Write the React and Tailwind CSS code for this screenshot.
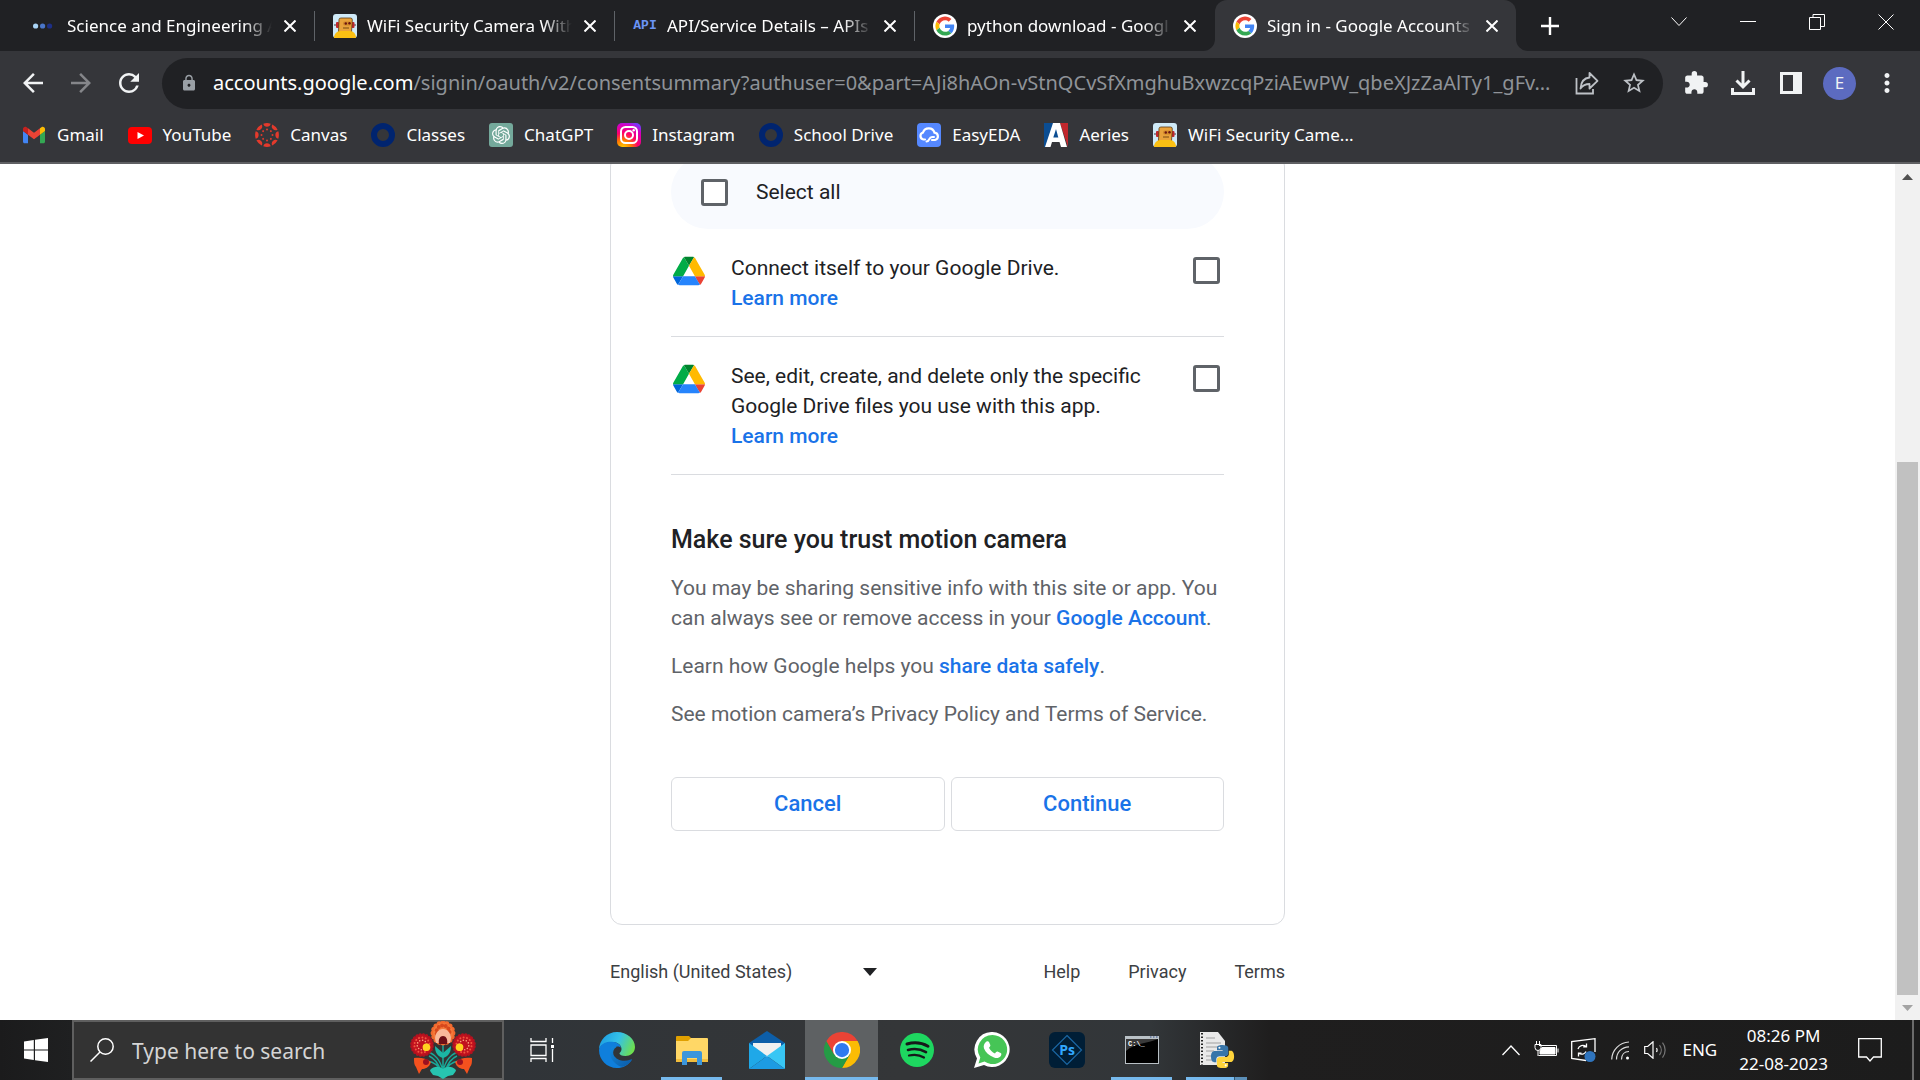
import { useState } from "react";
import {
  MdArrowBack,
  MdArrowForward,
  MdRefresh,
  MdLock,
  MdStarBorder,
  MdExtension,
  MdMoreVert,
} from "react-icons/md";
import { SiOpenai } from "react-icons/si";

const GoogleIcon = () => (
  <svg viewBox="-6 -6 60 60" className="size-6 shrink-0" aria-hidden="true">
    <circle cx="24" cy="24" r="30" fill="#fff" />
    <path fill="#EA4335" d="M24 9.5c3.54 0 6.71 1.22 9.21 3.6l6.85-6.85C35.9 2.38 30.47 0 24 0 14.62 0 6.51 5.38 2.56 13.22l7.98 6.19C12.43 13.72 17.74 9.5 24 9.5z" />
    <path fill="#4285F4" d="M46.98 24.55c0-1.57-.15-3.09-.38-4.55H24v9.02h12.94c-.58 2.96-2.26 5.48-4.78 7.18l7.73 6c4.51-4.18 7.09-10.36 7.09-17.65z" />
    <path fill="#FBBC05" d="M10.53 28.59c-.48-1.45-.76-2.99-.76-4.59s.27-3.14.76-4.59l-7.98-6.19C.92 16.46 0 20.12 0 24c0 3.88.92 7.54 2.56 10.78l7.97-6.19z" />
    <path fill="#34A853" d="M24 48c6.48 0 11.93-2.13 15.89-5.81l-7.73-6c-2.15 1.45-4.92 2.3-8.16 2.3-6.26 0-11.57-4.22-13.47-9.91l-7.98 6.19C6.51 42.62 14.62 48 24 48z" />
  </svg>
);

const DotsIcon = () => (
  <svg viewBox="0 0 24 24" className="size-6 shrink-0" aria-hidden="true">
    <circle cx="2.600" cy="12" r="2.6" fill="#a9d3f5" />
    <circle cx="9.600" cy="12" r="2.6" fill="#4a76c9" />
    <circle cx="16.600" cy="12" r="2.6" fill="#1d2f86" />
  </svg>
);

const RobotIcon = () => (
  <svg viewBox="0 0 24 24" className="size-6 shrink-0" aria-hidden="true">
    <rect width="24" height="24" rx="3" fill="#cfeaf8" />
    <path d="M1 11h22" stroke="#555" strokeWidth="1.2" />
    <rect x="3" y="8" width="3" height="6" rx="1" fill="#c0272d" />
    <rect x="18.500" y="8" width="3" height="6" rx="1" fill="#c0272d" />
    <path d="M6 5.500Q6 4 8 4h9.500q2 0 1.800 2L18.500 18h-13z" fill="#e9a23b" stroke="#5b3b14" strokeWidth=".8" />
    <rect x="10" y="7.500" width="8.500" height="4" rx="2" fill="#d0872a" />
    <circle cx="12.800" cy="9.500" r="1.200" fill="#6b1510" />
    <circle cx="16.500" cy="9.300" r="1.200" fill="#6b1510" />
    <path d="M10 14h6" stroke="#7a4a12" />
    <path d="M1 24c0-4 3-7 6-7h10c3.500 0 6 3 6 7z" fill="#fbc013" />
  </svg>
);

const ApiIcon = () => (
  <span className="w-6 shrink-0 text-center font-['Liberation_Mono',monospace] text-[13px] leading-6 font-bold text-[#6b94f5]">
    API
  </span>
);

const GmailIcon = () => (
  <svg viewBox="48 36 96 78" className="size-6 shrink-0" aria-hidden="true">
    <path fill="#4285f4" d="M58 108h14V74L52 59v43c0 3.32 2.69 6 6 6" />
    <path fill="#34a853" d="M120 108h14c3.32 0 6-2.69 6-6V59l-20 15" />
    <path fill="#fbbc04" d="M120 48v26l20-15v-8c0-7.42-8.47-11.65-14.4-7.2" />
    <path fill="#ea4335" d="M72 74V48l24 18 24-18v26L96 92" />
    <path fill="#c5221f" d="M52 51v8l20 15V48l-5.600-4.400c-5.940-4.450-14.400-.22-14.400 7.200" />
  </svg>
);

const YouTubeIcon = () => (
  <svg viewBox="0 0 24 24" className="size-6 shrink-0" aria-hidden="true">
    <rect y="4" width="24" height="17" rx="4" fill="#f00" />
    <path d="M9.500 9v7l6.500-3.500z" fill="#fff" />
  </svg>
);

const CanvasIcon = () => (
  <svg viewBox="0 0 24 24" className="size-6 shrink-0" aria-hidden="true" fill="#e33a2c">
    {[0, 45, 90, 135, 180, 225, 270, 315].map((a) => (
      <g key={a} transform={`rotate(${a} 12 12)`}>
        <path d="M8.300.7a11.900 11.900 0 0 1 7.400 0 3.800 3.800 0 0 1-7.400 0z" />
        <circle cx="12" cy="6.500" r="1" />
      </g>
    ))}
  </svg>
);

const RingIcon = () => (
  <svg viewBox="0 0 24 24" className="size-6 shrink-0" aria-hidden="true">
    <circle cx="12" cy="12" r="9" fill="none" stroke="#00246f" strokeWidth="6" />
  </svg>
);

const ChatIcon = () => (
  <span className="flex size-6 shrink-0 items-center justify-center rounded-[3px] bg-[#74a99b] text-white">
    <SiOpenai size={18} />
  </span>
);

const InstagramIcon = () => (
  <svg viewBox="0 0 24 24" className="size-6 shrink-0" aria-hidden="true">
    <defs>
      <radialGradient id="ig" cx=".25" cy="1.05" r="1.15">
        <stop offset="0" stopColor="#ffd600" />
        <stop offset=".3" stopColor="#ff7a00" />
        <stop offset=".55" stopColor="#ff0069" />
        <stop offset=".85" stopColor="#d300c5" />
        <stop offset="1" stopColor="#7638fa" />
      </radialGradient>
    </defs>
    <rect width="24" height="24" rx="5" fill="url(#ig)" />
    <g fill="none" stroke="#fff" strokeWidth="2">
      <rect x="4" y="4" width="16" height="16" rx="4.500" />
      <circle cx="12" cy="12" r="4" />
    </g>
    <circle cx="16.700" cy="7.300" r="1.200" fill="#fff" />
  </svg>
);

const EasyEdaIcon = () => (
  <svg viewBox="0 0 24 24" className="size-6 shrink-0" aria-hidden="true">
    <rect width="24" height="24" rx="4" fill="#5588ff" />
    <path
      d="M8 16.500H6.500a3.600 3.600 0 0 1-.5-7 6 6 0 0 1 11.500.2 3.700 3.700 0 0 1 .5 7.300h-3"
      fill="none"
      stroke="#fff"
      strokeWidth="2.200"
      strokeLinecap="round"
    />
    <path d="M9.500 18.500c3.500 0 2-4.500 5.500-4.500h2" fill="none" stroke="#fff" strokeWidth="2" strokeLinecap="round" />
  </svg>
);

const AeriesIcon = () => (
  <svg viewBox="0 0 24 24" className="size-6 shrink-0" aria-hidden="true">
    <path d="M0 0h12L2 24H0z" fill="#0b4d92" />
    <path d="M16 0h8v24z" fill="#c1272d" />
    <path d="M9 0h7l7 24h-6l-1.500-5H8l-1.500 5H1z" fill="#fff" />
    <path d="m12 6 2.300 8.500H9.300z" fill="#0b4d92" />
  </svg>
);

const DriveIcon = () => (
  <svg viewBox="0 0 87.3 78" className="mx-0.5 mt-[3px] h-[30px] w-8 shrink-0" aria-hidden="true">
    <path fill="#0066da" d="m6.6 66.85 3.85 6.65c.8 1.4 1.95 2.5 3.3 3.3l13.75-23.8h-27.5c0 1.55.4 3.1 1.2 4.5z" />
    <path fill="#00ac47" d="m43.65 25-13.75-23.8c-1.35.8-2.5 1.9-3.3 3.3l-25.4 44a9.06 9.06 0 0 0 -1.2 4.5h27.5z" />
    <path fill="#ea4335" d="m73.55 76.8c1.35-.8 2.5-1.9 3.3-3.3l1.6-2.75 7.65-13.25c.8-1.4 1.2-2.95 1.2-4.5h-27.502l5.852 11.5z" />
    <path fill="#00832d" d="m43.65 25 13.75-23.8c-1.35-.8-2.9-1.2-4.5-1.2h-18.5c-1.6 0-3.15.45-4.5 1.2z" />
    <path fill="#2684fc" d="m59.8 53h-32.3l-13.75 23.8c1.35.8 2.9 1.2 4.5 1.2h50.8c1.6 0 3.15-.45 4.5-1.2z" />
    <path fill="#ffba00" d="m73.4 26.5-12.7-22c-.8-1.4-1.95-2.5-3.3-3.3l-13.75 23.8 16.15 28h27.45c0-1.55-.4-3.1-1.2-4.5z" />
  </svg>
);

const tabs = [
  { title: "Science and Engineering A", icon: <DotsIcon /> },
  { title: "WiFi Security Camera With", icon: <RobotIcon /> },
  { title: "API/Service Details – APIs", icon: <ApiIcon /> },
  { title: "python download - Googl", icon: <GoogleIcon /> },
  { title: "Sign in - Google Accounts", icon: <GoogleIcon />, active: true },
];

const bookmarks = [
  { name: "Gmail", icon: <GmailIcon /> },
  { name: "YouTube", icon: <YouTubeIcon /> },
  { name: "Canvas", icon: <CanvasIcon /> },
  { name: "Classes", icon: <RingIcon /> },
  { name: "ChatGPT", icon: <ChatIcon /> },
  { name: "Instagram", icon: <InstagramIcon /> },
  { name: "School Drive", icon: <RingIcon /> },
  { name: "EasyEDA", icon: <EasyEdaIcon /> },
  { name: "Aeries", icon: <AeriesIcon /> },
  { name: "WiFi Security Came...", icon: <RobotIcon /> },
];

function Tab({ tab, divider }) {
  return (
    <div
      className={
        tab.active
          ? "relative flex w-[301px] items-center rounded-t-xl bg-[#35363a] pr-3 pl-[18px]"
          : "flex w-[300px] items-center pl-[18px]"
      }
    >
      {tab.active && (
        <>
          <svg viewBox="0 0 12 12" className="absolute bottom-0 -left-3 size-3" fill="#35363a">
            <path d="M12 0v12H0A12 12 0 0 0 12 0z" />
          </svg>
          <svg viewBox="0 0 12 12" className="absolute -right-3 bottom-0 size-3" fill="#35363a">
            <path d="M0 0v12h12A12 12 0 0 1 0 0z" />
          </svg>
        </>
      )}
      {tab.icon}
      <span className="ml-2.5 min-w-0 flex-1 overflow-hidden text-[17px] whitespace-nowrap [mask-image:linear-gradient(to_right,black_86%,transparent)]">
        {tab.title}
      </span>
      <button aria-label="Close tab" className="ml-1.5 flex size-6 items-center justify-center">
        <svg viewBox="0 0 12 12" className="size-3" stroke="#fff" strokeWidth="2">
          <path d="m.5.5 11 11m0-11-11 11" />
        </svg>
      </button>
      {!tab.active && (
        <span className={divider ? "ml-3 h-[30px] w-px bg-[#5f6368]" : "ml-3 w-px"} />
      )}
    </div>
  );
}

function TabStrip() {
  return (
    <div className="flex h-[51px] bg-[#202124] pl-[15px]">
      {tabs.map((tab, i) => (
        <Tab key={tab.title} tab={tab} divider={i < 3} />
      ))}
      <button aria-label="New tab" className="ml-3 flex w-11 items-center justify-center">
        <svg viewBox="0 0 18 18" className="size-[18px]" stroke="#fff" strokeWidth="2.4">
          <path d="M9 0v18M0 9h18" />
        </svg>
      </button>
      <div className="ml-auto flex h-[43px]">
        <button aria-label="Search tabs" className="flex w-[68px] items-center justify-center">
          <svg viewBox="0 0 16 10" className="h-[10px] w-4" fill="none" stroke="#fff">
            <path d="m.5.5 7.500 8 7.500-8" />
          </svg>
        </button>
        <button aria-label="Minimize" className="flex w-[69px] items-center justify-center">
          <span className="h-px w-4 bg-white" />
        </button>
        <button aria-label="Restore" className="flex w-[69px] items-center justify-center">
          <svg viewBox="0 0 16 16" className="size-4" fill="none" stroke="#fff">
            <path d="M.5 3.500h11v12H.5zM4 3.500v-3h11.500v12h-4" />
          </svg>
        </button>
        <button aria-label="Close" className="flex w-[69px] items-center justify-center">
          <svg viewBox="0 0 16 16" className="size-4" stroke="#fff">
            <path d="m.5.5 15 15m0-15-15 15" />
          </svg>
        </button>
      </div>
    </div>
  );
}

function Toolbar() {
  return (
    <div className="flex h-16 items-center pl-[18px] text-[#f1f3f4]">
      <button aria-label="Back" className="mr-[18px]"><MdArrowBack size={30} /></button>
      <button aria-label="Forward" className="mr-[18px] text-[#85868a]"><MdArrowForward size={30} /></button>
      <button aria-label="Reload" className="mr-[18px]"><MdRefresh size={30} /></button>
      <div className="flex h-[51px] min-w-0 flex-1 items-center rounded-full bg-[#202124] pr-4 pl-[18px]">
        <MdLock size={18} className="shrink-0 text-[#9aa0a6]" />
        <label htmlFor="url" className="ml-[15px] text-xl text-white">accounts.google.com</label>
        <input
          id="url"
          type="text"
          defaultValue="/signin/oauth/v2/consentsummary?authuser=0&part=AJi8hAOn-vStnQCvSfXmghuBxwzcqPziAEwPW_qbeXJzZaAlTy1_gFv..."
          className="min-w-0 flex-1 bg-transparent text-xl text-[#8f9398] outline-none"
        />
        <button aria-label="Share this page" className="ml-4">
          <svg viewBox="0 0 24 24" className="size-6" fill="none" stroke="#bdc1c6" strokeWidth="1.800">
            <path d="M1.500 7v15.500H18V18" />
            <path d="M14.500 2v4.500C9 7 6 10.500 5.500 17.500c2.500-3.500 5-4.500 9-4.500v4.500l8-7.700z" strokeLinejoin="round" />
          </svg>
        </button>
        <button aria-label="Bookmark this tab" className="ml-[22px] text-[#bdc1c6]"><MdStarBorder size={26} /></button>
      </div>
      <button aria-label="Extensions" className="ml-5"><MdExtension size={26} /></button>
      <button aria-label="Downloads" className="ml-[22px]">
        <svg viewBox="0 0 24 24" className="size-6" fill="none" stroke="currentColor" strokeWidth="3">
          <path d="M12 0v15M5.500 9.500l6.500 6.500 6.500-6.500M1.500 17v5.500h21V17" />
        </svg>
      </button>
      <button aria-label="Side panel" className="ml-[25px]">
        <svg viewBox="0 0 22 22" className="size-[22px]">
          <path d="M0 0h22v22H0zM3 3v16h10V3z" fill="currentColor" fillRule="evenodd" />
        </svg>
      </button>
      <button className="ml-[21px] size-[33px] rounded-full bg-[#5c6bc0] text-[17px]">E</button>
      <button aria-label="Menu" className="mr-[18px] ml-4"><MdMoreVert size={30} /></button>
    </div>
  );
}

function BookmarksBar() {
  return (
    <nav className="flex h-[47px] items-center gap-6 pb-2 pl-[22px]">
      {bookmarks.map((b) => (
        <a key={b.name} href="#" className="flex items-center gap-[11px] text-[17px] whitespace-nowrap">
          {b.icon}
          {b.name}
        </a>
      ))}
    </nav>
  );
}

const checkboxClass =
  "size-[27px] shrink-0 appearance-none rounded-[3px] border-3 border-[#5f6368] bg-white checked:bg-[#1a73e8]";
const linkClass = "font-medium text-[#1a73e8]";

function Scope({ id, checked, onChange, children }) {
  return (
    <div className="flex border-b border-[#dadce0] pt-6 pb-[23px]">
      <DriveIcon />
      <div className="mr-10 ml-6 flex-1">
        <label htmlFor={id}>{children}</label>
        <br />
        <a href="#" className={linkClass}>Learn more</a>
      </div>
      <input id={id} type="checkbox" checked={checked} onChange={onChange} className={`mt-1 mr-1 ${checkboxClass}`} />
    </div>
  );
}

function Consent() {
  const [scopes, setScopes] = useState({ connect: false, files: false });

  const toggle = (name) => setScopes((prev) => ({ ...prev, [name]: !prev[name] }));
  const allChecked = scopes.connect && scopes.files;

  return (
    <div className="-mt-2.5 w-[675px]">
      <div className="rounded-xl border border-[#dadce0] px-[60px] pb-[93px] text-[21px] leading-[30px] text-[#202124]">
        <div className="flex h-[74px] items-center rounded-full bg-[#f8fafe] pl-[30px]">
          <input
            id="all"
            type="checkbox"
            checked={allChecked}
            onChange={() => setScopes({ connect: !allChecked, files: !allChecked })}
            className={checkboxClass}
          />
          <label htmlFor="all" className="ml-7">Select all</label>
        </div>
        <Scope id="connect" checked={scopes.connect} onChange={() => toggle("connect")}>
          Connect itself to your Google Drive.
        </Scope>
        <Scope id="files" checked={scopes.files} onChange={() => toggle("files")}>
          See, edit, create, and delete only the specific Google Drive files you use with this app.
        </Scope>
        <h2 className="mt-[47px] text-[25px] leading-9 font-medium">Make sure you trust motion camera</h2>
        <div className="mt-[15px] space-y-[18px] text-[#5f6368]">
          <p>
            You may be sharing sensitive info with this site or app. You can always see or remove access in your{" "}
            <a href="#" className={linkClass}>Google Account</a>.
          </p>
          <p>
            Learn how Google helps you <a href="#" className={linkClass}>share data safely</a>.
          </p>
          <p>See motion camera’s Privacy Policy and Terms of Service.</p>
        </div>
        <div className="mt-12 grid grid-cols-2 gap-1.5 text-[22px] font-medium text-[#1a73e8]">
          <button className="h-[54px] rounded-md border border-[#dadce0]">Cancel</button>
          <button className="h-[54px] rounded-md border border-[#dadce0]">Continue</button>
        </div>
      </div>
      <footer className="mt-[34px] flex items-center justify-between text-lg leading-[26px] text-[#3c4043]">
        <div className="relative w-[267px]">
          <select aria-label="Language" className="w-full appearance-none bg-transparent outline-none">
            <option>English (United States)</option>
          </select>
          <svg viewBox="0 0 14 8" className="pointer-events-none absolute top-[9px] right-0 h-2 w-[14px]" fill="#202124">
            <path d="M0 0h14L7 8z" />
          </svg>
        </div>
        <div className="flex gap-12">
          <a href="#">Help</a>
          <a href="#">Privacy</a>
          <a href="#">Terms</a>
        </div>
      </footer>
    </div>
  );
}

function Scrollbar() {
  return (
    <div className="flex w-[25px] flex-col items-center bg-[#f1f1f1]">
      <svg viewBox="0 0 25 25" className="size-[25px]" fill="#505050"><path d="m12.500 10 5.500 6H7z" /></svg>
      <div className="flex-[273]" />
      <div className="w-[21px] flex-[533] bg-[#c1c1c1]" />
      <svg viewBox="0 0 25 25" className="size-[25px]" fill="#a3a3a3"><path d="m12.500 16 5.500-6H7z" /></svg>
    </div>
  );
}

const petals = (cx, cy, r, n, size, fill) =>
  Array.from({ length: n }, (_, i) => {
    const a = (i * 2 * Math.PI) / n;
    return <circle key={i} cx={cx + r * Math.cos(a)} cy={cy + r * Math.sin(a)} r={size} fill={fill} />;
  });

const Bloom = ({ cx, cy, eye, rotate }) => (
  <g transform={`rotate(${rotate} ${cx} ${cy})`}>
    {petals(cx, cy, 10, 20, 1.9, "#b3121f")}
    <circle cx={cx} cy={cy} r="10" fill="#c1121f" />
    {petals(cx, cy, 7.6, 14, 1, "#f0563f")}
    {petals(cx, cy, 4.8, 10, 0.8, "#f7a07a")}
    <circle cx={eye} cy={cy + 3} r="3.800" fill="#ffd21f" />
  </g>
);

const FlowerIcon = () => (
  <svg viewBox="0 0 66 58" className="h-[58px] w-[66px]" aria-hidden="true">
    <g fill="none" stroke="#18a999" strokeWidth="1.500">
      <path d="M33 50V20M33 50C30 38 25 34 19 31M33 50c3-12 8-16 14-19M33 52c-4-8-9-11-16-12M33 52c4-8 9-11 16-12M31 50C28 42 24 37 19 35M35 50c3-8 7-13 12-15" />
    </g>
    {petals(33, 12, 9.8, 16, 2.6, "#f26a2e")}
    <circle cx="33" cy="12" r="10" fill="#f47b3c" />
    {petals(33, 11, 6.5, 11, 2, "#d8481c")}
    <path d="M26 22c-3-8 2-14 7-14s10 6 7 14z" fill="#f9b99b" />
    <path d="M29 23c-1-5 1-8 4-8s5 3 4 8z" fill="#6d0f16" />
    <Bloom cx={12} cy={24} eye={16} rotate={-10} />
    <Bloom cx={54} cy={24} eye={50} rotate={10} />
    <path d="M4 37c6-1 12 0 17 4-2 6-6 7-9 7l-3 5-3-7c-2-2-2-5-2-9z" fill="#f4511e" />
    <path d="M62 37c-6-1-12 0-17 4 2 6 6 7 9 7l3 5 3-7c2-2 2-5 2-9z" fill="#f4511e" />
    <circle cx="16" cy="41" r="3" fill="#9c1020" />
    <circle cx="50" cy="41" r="3" fill="#9c1020" />
    <path d="m25 25 8 7 8-7c0 6-2 10-8 12-6-2-8-6-8-12z" fill="#1bb5a3" />
    <path d="M20 49c4-4 9-4 13-1 4-3 9-3 13 1 0 2-2 3-3 5l-5 1-5 3-5-3-5-1c-1-2-3-3-3-5z" fill="#27c4b0" />
  </svg>
);

const EdgeIcon = () => (
  <svg viewBox="0 0 36 36" className="size-9" aria-hidden="true">
    <defs>
      <linearGradient id="edgeTop" x1="0" y1=".3" x2="1" y2=".6">
        <stop offset="0" stopColor="#1b9de2" />
        <stop offset=".5" stopColor="#35c1e8" />
        <stop offset="1" stopColor="#6fe04b" />
      </linearGradient>
      <linearGradient id="edgeLow" x1="0" y1="0" x2="1" y2="1">
        <stop offset="0" stopColor="#1287dc" />
        <stop offset="1" stopColor="#0c59a4" />
      </linearGradient>
    </defs>
    <path d="M0 18C0 8 8 0 18 0s18 7 18 15c0 6-5 9-9.500 9-4 0-6-1.500-6-2.500s2-1.500 2-4.500c0-4-4-7-9-7C7 10 1 13 0 18z" fill="url(#edgeTop)" />
    <path d="M0 18C1 12 7 9.500 13 9.800c5 .2 8.500 3 9 6-1-1-3-1.800-5-.8-2.500 1-4.500 4-3.500 8 1.500 5 8 8 14 7l5-2C29 33.500 24 36 18 36 8 36 0 28 0 18z" fill="#0f7fdc" />
    <path d="M13 14.500c-3 4-2.500 11 2 15.500 3 3 6 5 9 4.800 4-1.300 7-4 9-7-.5-.8-1-.3-2 0-6 2.500-14 .5-16.500-5-1-3 0-6 3-7.800z" fill="url(#edgeLow)" />
  </svg>
);

const ExplorerIcon = () => (
  <svg viewBox="0 0 34 30" className="h-[30px] w-[34px]" aria-hidden="true">
    <path d="M1 2a1 1 0 0 1 1-1h12l3 3v4H1z" fill="#e0a000" />
    <path d="M1 6h12l3-3h16a1 1 0 0 1 1 1v23H1z" fill="#ffd766" />
    <path d="M1 24h32v3H1z" fill="#f2bd3c" />
    <path d="M7 18a2 2 0 0 1 2-2h16a2 2 0 0 1 2 2v12h-5v-7H12v7H7z" fill="#3b96dc" />
  </svg>
);

const MailIcon = () => (
  <svg viewBox="0 0 36 38" className="h-[38px] w-9" aria-hidden="true">
    <path d="M0 12 18 0l18 12v4H0z" fill="#0d5ea8" />
    <path d="M4 12h28v14H4z" fill="#f0f0f0" />
    <path d="M0 12l18 13L0 38z" fill="#1fa8e8" />
    <path d="m18 25 18-13v26z" fill="#38c6f4" />
    <path d="m18 25 18 13H0z" fill="#1d9be2" />
  </svg>
);

const ChromeIcon = () => (
  <svg viewBox="0 0 48 48" className="size-9" aria-hidden="true">
    <path d="M24 12h20.800A24 24 0 0 1 24 48l10.400-18z" fill="#fbbc04" />
    <path d="M13.600 30 3.200 12A24 24 0 0 0 24 48l10.400-18z" fill="#259b45" />
    <path d="M24 12h20.800A24 24 0 0 0 3.200 12l10.400 18z" fill="#ea4335" />
    <circle cx="24" cy="24" r="12" fill="#fff" />
    <circle cx="24" cy="24" r="9.500" fill="#307af0" />
  </svg>
);

const SpotifyIcon = () => (
  <svg viewBox="0 0 34 34" className="size-[34px]" aria-hidden="true">
    <circle cx="17" cy="17" r="17" fill="#1ed760" />
    <g fill="none" stroke="#16181a" strokeLinecap="round">
      <path d="M7 11c7-2 15-1.200 21 2.200" strokeWidth="3" />
      <path d="M8 17c6-1.700 12.500-1 18 2.200" strokeWidth="2.600" />
      <path d="M9 22.500c5-1.200 10.500-.8 15 2" strokeWidth="2.200" />
    </g>
  </svg>
);

const WhatsAppIcon = () => (
  <svg viewBox="0 0 36 36" className="size-9" aria-hidden="true">
    <path d="M18.500 0A17.500 17.500 0 1 1 10 33L0 36l3-9.500A17.500 17.500 0 0 1 18.500 0z" fill="#fff" />
    <path d="M18.500 3A14.500 14.500 0 1 1 10.500 29.500L4.500 31.500l1.800-6A14.500 14.500 0 0 1 18.500 3z" fill="#46c556" />
    <path d="M12.500 9.500c.8-.6 2-.5 2.500.5l1.300 3c.3.8-.3 1.500-1.300 2.700 1.200 2.600 3.200 4.500 6 5.700 1.200-1.500 1.700-2.200 2.500-1.900l3.200 1.600c1 .5.8 2-.1 3.200-1.500 1.800-4 2.200-6.600 1.200-5-1.800-8.500-5.200-10-9-.8-2.500 0-5.500 2.500-7z" fill="#fff" />
  </svg>
);

const PhotoshopIcon = () => (
  <span className="flex size-9 items-center justify-center rounded-md bg-[#001e36]">
    <svg viewBox="0 0 32 32" className="size-8" aria-hidden="true">
      <path d="M16 1.500 30.500 16 16 30.500 1.500 16z" fill="none" stroke="#1a67a3" strokeWidth="1.200" />
      <text x="16" y="21" textAnchor="middle" fontSize="14" fontWeight="700" fill="#31a8ff" fontFamily="Open Sans, sans-serif">Ps</text>
    </svg>
  </span>
);

const TerminalIcon = () => (
  <svg viewBox="0 0 34 28" className="h-7 w-[34px]" aria-hidden="true">
    <rect width="34" height="28" fill="#b9c1c6" />
    <rect x="1" y="3" width="32" height="24" fill="#000" />
    <path d="M1 3h32C24 7 10 7 1 15z" fill="#3a3a3a" />
    <path d="M25 1h1.500m1.500 0h1.500m1.500 0h1.500" stroke="#344f8a" />
    <text x="3" y="10" fontSize="7" fontWeight="700" fill="#fff" fontFamily="Liberation Mono, monospace">C:\_</text>
  </svg>
);

const PythonFileIcon = () => (
  <svg viewBox="0 0 36 36" className="size-9" aria-hidden="true">
    <path d="M1 0h18l7 9v24H1z" fill="#e9e9e9" />
    <path d="M3 1v32" stroke="#222" strokeWidth="2" strokeDasharray="1.500 2" />
    <path d="M7 6h9M7 11h15M7 15h12M7 19h8M7 24h5M7 28h8" stroke="#b8b8b8" strokeWidth="1.500" />
    <g transform="translate(12 13) scale(.21)">
      <path d="M54.900 0c-28.100 0-26.300 12.200-26.300 12.200v12.600h26.800v3.800H18S0 26.600 0 54.900s15.700 27.300 15.700 27.300h9.400V69s-.5-15.700 15.400-15.700h26.600s14.900.24 14.900-14.400V14.700S84.300 0 54.900 0z" fill="#3775a9" />
      <g transform="rotate(180 55 55)">
        <path d="M54.900 0c-28.100 0-26.300 12.200-26.300 12.200v12.600h26.800v3.800H18S0 26.600 0 54.900s15.700 27.300 15.700 27.300h9.400V69s-.5-15.700 15.400-15.700h26.600s14.900.24 14.900-14.400V14.700S84.300 0 54.900 0z" fill="#ffd43b" />
        <circle cx="40" cy="13" r="5" fill="#fff" />
      </g>
      <circle cx="40" cy="13" r="5" fill="#fff" />
    </g>
  </svg>
);

const apps = [
  { name: "Edge", icon: <EdgeIcon /> },
  { name: "File Explorer", icon: <ExplorerIcon />, open: true },
  { name: "Mail", icon: <MailIcon /> },
  { name: "Chrome", icon: <ChromeIcon />, focused: true },
  { name: "Spotify", icon: <SpotifyIcon /> },
  { name: "WhatsApp", icon: <WhatsAppIcon /> },
  { name: "Photoshop", icon: <PhotoshopIcon /> },
  { name: "Command Prompt", icon: <TerminalIcon />, open: true },
  { name: "Python", icon: <PythonFileIcon />, open: true, stacked: true },
];

function AppButton({ app }) {
  return (
    <button
      aria-label={app.name}
      className={
        app.focused
          ? "relative mx-px flex w-[73px] items-center justify-center bg-[#5e6163]"
          : "relative flex w-[75px] items-center justify-center"
      }
    >
      {app.icon}
      {app.focused && <span className="absolute inset-x-0 bottom-0 h-[3px] bg-[#76b9ed]" />}
      {app.open && (
        <span className="absolute inset-x-[7px] bottom-0 flex h-[3px]">
          <span className="flex-1 bg-[#76b9ed]" />
          {app.stacked && <span className="w-[13px] border-l border-[#33566f] bg-[#5b8fb8]" />}
        </span>
      )}
    </button>
  );
}

function Taskbar() {
  return (
    <footer className="flex h-[60px] shrink-0 bg-linear-[90deg,#1b1b1c_0px,#1f2021_72px,#303438_500px,#343638_900px,#323639_1150px,#1f1e1e_1270px,#1c1c1c_100%] font-['Noto_Sans',sans-serif] text-white">
      <button aria-label="Start" className="flex w-[72px] items-center justify-center">
        <svg viewBox="0 0 24 24" className="size-6" fill="#fff">
          <path d="M0 3.400 9.800 2v9.500H0zM11 1.800 24 0v11.500H11zM0 12.500h9.800V22L0 20.600zM11 12.500h13V24l-13-1.800z" />
        </svg>
      </button>
      <div className="flex w-[432px] items-center border-2 border-[#5f5f5f] bg-[#333] pl-4">
        <svg viewBox="0 0 24 24" className="size-6 shrink-0" fill="none" stroke="#fff" strokeWidth="1.500">
          <circle cx="15.500" cy="8.500" r="7.700" />
          <path d="M10 14 .5 23.500" />
        </svg>
        <input
          type="text"
          aria-label="Search"
          placeholder="Type here to search"
          className="ml-[18px] min-w-0 flex-1 bg-transparent pt-1 text-[21px] outline-none placeholder:text-[#d5d5d5]"
        />
        <span className="mr-[26px] shrink-0"><FlowerIcon /></span>
      </div>
      <button aria-label="Task View" className="flex w-[75px] items-center justify-center">
        <svg viewBox="0 0 24 24" className="size-6" fill="none" stroke="#fff" strokeWidth="1.300">
          <path d="M1 0v3.500h15V0M1 24v-3.500h15V24M1 7h15v10.500H1zM22.500 0v5M22.500 11v13" />
          <path d="M21 7h3v3h-3z" fill="#fff" stroke="none" />
        </svg>
      </button>
      {apps.map((app) => (
        <AppButton key={app.name} app={app} />
      ))}
      <div className="ml-auto flex items-center">
        <button aria-label="Show hidden icons" className="mr-[14px]">
          <svg viewBox="0 0 18 11" className="h-[11px] w-[18px]" fill="none" stroke="#fff" strokeWidth="1.300"><path d="m.5 10 8.500-9 8.500 9" /></svg>
        </button>
        <svg viewBox="0 0 25 18" className="mr-3 mb-0.5 h-[18px] w-[25px]" fill="none" stroke="#fff">
          <path d="M5 5.500h17.500v10H4.500M24 8.500v4" />
          <path d="M8 7.500h13v6.500H6v-3z" fill="#fff" />
          <path d="M1 4.500h6v3a3 3 0 0 1-6 0zM2.500 1v3M5.500 1v3M4 10.500V16" />
        </svg>
        <svg viewBox="0 0 25 24" className="mr-[15px] h-6 w-[25px]" fill="none" stroke="#fff" strokeWidth="1.300">
          <path d="M15 22.500.7 20.500V3.500L24 .7V14" />
          <path d="M7 11a5 5 0 0 1 8-2.500M15.500 5.500v3.300h-3.300M15 13.500a5 5 0 0 1-7 2M7.500 18.500v-3.300h3" />
          <circle cx="19" cy="18.500" r="5.500" fill="#2f74bd" stroke="none" />
        </svg>
        <svg viewBox="0 0 18 19" className="mr-[15px] h-[19px] w-[18px]" fill="none" stroke="#ddd" strokeWidth="1.200">
          <path d="M.7 18.500A18 18 0 0 1 18 1M5.500 18.500C5.500 11 11 6 18 5.800M10.500 18.500c0-5 3-8 7.500-8" />
          <circle cx="16.500" cy="17" r="1.500" fill="#fff" stroke="none" />
        </svg>
        <svg viewBox="0 0 22 18" className="mr-[17px] h-[18px] w-[22px]" fill="none" stroke="#fff" strokeWidth="1.200">
          <path d="M.7 5.500h3L9 .8v16.400l-5.300-4.700h-3zM12.500 7a4 4 0 0 1 0 4" />
          <path d="M15.500 4a8 8 0 0 1 0 10M18.500 1.500a12 12 0 0 1 0 15" stroke="#777" />
        </svg>
        <span className="text-[17px]">ENG</span>
        <div className="ml-[22px] text-center text-[17px] leading-7">
          <div>08:26 PM</div>
          <div>22-08-2023</div>
        </div>
        <button aria-label="Notifications" className="mr-[30px] ml-[30px]">
          <svg viewBox="0 0 24 24" className="size-6" fill="none" stroke="#fff" strokeWidth="1.300">
            <path d="M.7.7h22.600V19H15.500L12 23l-3.500-4H.7z" />
          </svg>
        </button>
        <span className="mr-[6px] h-[60px] w-0.5 bg-[#6a6a6a]" />
      </div>
    </footer>
  );
}

export default function App() {
  return (
    <div className="flex h-screen flex-col overflow-hidden bg-white">
      <header className="shrink-0 border-b-2 border-[#5f6063] bg-[#35363a] font-['Noto_Sans',sans-serif] text-white">
        <TabStrip />
        <Toolbar />
        <BookmarksBar />
      </header>
      <div className="flex min-h-0 flex-1 font-[Roboto,sans-serif]">
        <main className="flex flex-1 justify-center overflow-hidden">
          <Consent />
        </main>
        <Scrollbar />
      </div>
      <Taskbar />
    </div>
  );
}
